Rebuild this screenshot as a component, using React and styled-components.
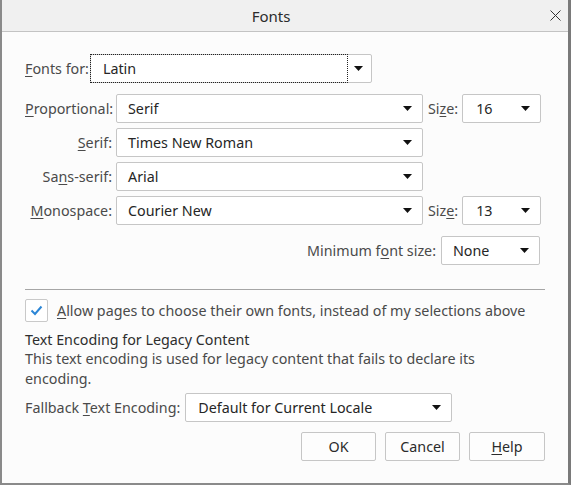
import React from 'react';
import styled, { createGlobalStyle } from 'styled-components';

const GlobalStyle = createGlobalStyle`
  html, body {
    margin: 0;
    padding: 0;
    background: #fcfcfc;
  }
  * {
    box-sizing: border-box;
  }
`;

const FONT = '"Noto Sans", "Open Sans", sans-serif';

const Window = styled.div`
  width: 571px;
  height: 485px;
  display: flex;
  flex-direction: column;
  background: #fcfcfc;
  border-left: 2px solid #8a8a8a;
  border-right: 3px solid #7a7a7a;
  border-bottom: 2px solid #8a8a8a;
  font-family: ${FONT};
  font-size: 14.3px;
  line-height: 19px;
  color: #4a4a4a;
`;

const TitleBar = styled.div`
  height: 32px;
  flex: none;
  display: flex;
  align-items: center;
  background: #f0f0f0;
  border-bottom: 1px solid #c3c3c3;
`;

const Title = styled.div`
  flex: 1;
  text-align: center;
  font-size: 15px;
  color: #2b2b2b;
  padding-top: 1px;
`;

const CloseButton = styled.div`
  width: 28px;
  height: 31px;
  display: flex;
  align-items: center;
  justify-content: center;
  padding-left: 2px;
`;

const Body = styled.div`
  flex: 1;
  display: flex;
  flex-direction: column;
  padding: 22px 23px 0 23px;
`;

const Row = styled.div`
  display: flex;
  align-items: center;
  gap: ${(p) => p.gap ?? 4}px;
  justify-content: ${(p) => (p.right ? 'flex-end' : 'flex-start')};
  margin-top: ${(p) => p.mt || 0}px;
`;

const Label = styled.span`
  white-space: nowrap;
  color: #4a4a4a;
  width: ${(p) => (p.w ? `${p.w}px` : 'auto')};
  text-align: ${(p) => (p.w ? 'right' : 'left')};
  flex: none;
`;

const Key = styled.span`
  text-decoration: underline;
  text-underline-offset: 2px;
`;

const SelectBox = styled.div`
  position: relative;
  width: ${(p) => p.w}px;
  height: 29px;
  flex: none;
  display: flex;
  align-items: center;
  background: #ffffff;
  border: 1px solid #c6c6c6;
  border-radius: 2px;
  padding-left: ${(p) => p.pad || 11}px;
  padding-right: ${(p) => p.arrowRight || 10}px;
  color: #262626;
`;

const SelectText = styled.span`
  flex: 1;
  white-space: nowrap;
`;

const FocusRing = styled.div`
  position: absolute;
  left: -1px;
  top: -1px;
  bottom: -1px;
  width: ${(p) => p.w}px;
  border: 1px dotted #222;
  pointer-events: none;
`;

const Separator = styled.div`
  height: 1px;
  background: #a6a6a6;
  margin-top: 24px;
`;

const CheckRow = styled.label`
  display: flex;
  align-items: center;
  gap: 9px;
  margin-top: 9px;
  color: #4a4a4a;
`;

const CheckBox = styled.span`
  width: 23px;
  height: 23px;
  flex: none;
  display: flex;
  align-items: center;
  justify-content: center;
  background: #ffffff;
  border: 1px solid #c9c9c9;
  border-radius: 2px;
`;

const Heading = styled.div`
  margin-top: 8px;
  color: #2e2e2e;
  line-height: 19px;
`;

const Description = styled.div`
  color: #4a4a4a;
  line-height: 20px;
  max-width: 500px;
`;

const Buttons = styled.div`
  display: flex;
  justify-content: flex-end;
  gap: 9px;
  margin-top: 10px;
`;

const Button = styled.div`
  width: ${(p) => p.w || 75}px;
  height: 29px;
  display: flex;
  align-items: center;
  justify-content: center;
  background: #fdfdfd;
  border: 1px solid #c6c6c6;
  border-radius: 2px;
  color: #2b2b2b;
`;

const Arrow = () => (
  <svg width="9" height="5" viewBox="0 0 9 5">
    <polygon points="0,0 9,0 4.5,5" fill="#111" />
  </svg>
);

const Select = ({ w, value, focus, pad, arrowRight }) => (
  <SelectBox w={w} pad={pad} arrowRight={arrowRight}>
    {focus && <FocusRing w={focus} />}
    <SelectText>{value}</SelectText>
    <Arrow />
  </SelectBox>
);

const fontRows = [
  { label: <><Key>P</Key>roportional:</>, value: 'Serif', size: <>Si<Key>z</Key>e:</>, sizeValue: '16' },
  { label: <><Key>S</Key>erif:</>, value: 'Times New Roman' },
  { label: <>Sa<Key>n</Key>s-serif:</>, value: 'Arial' },
  { label: <><Key>M</Key>onospace:</>, value: 'Courier New', size: <>Siz<Key>e</Key>:</>, sizeValue: '13' },
];

const App = () => (
  <>
    <GlobalStyle />
    <Window>
      <TitleBar>
        <Title>Fonts</Title>
        <CloseButton>
          <svg width="11" height="11" viewBox="0 0 11 11">
            <path d="M0.5 0.5 L10.5 10.5 M10.5 0.5 L0.5 10.5" stroke="#333" strokeWidth="1" />
          </svg>
        </CloseButton>
      </TitleBar>
      <Body>
        <Row gap={1}>
          <Label><Key>F</Key>onts for:</Label>
          <Select w={282} value="Latin" focus={258} pad={12} arrowRight={8} />
        </Row>

        {fontRows.map((r, i) => (
          <Row key={i} mt={i === 0 ? 11 : 5}>
            <Label w={87}>{r.label}</Label>
            <Select w={307} value={r.value} />
            {r.size && (
              <>
                <Label style={{ marginLeft: 1 }}>{r.size}</Label>
                <Select w={79} value={r.sizeValue} pad={13} arrowRight={10} />
              </>
            )}
          </Row>
        ))}

        <Row right mt={11} gap={5} style={{ paddingRight: 5 }}>
          <Label>Minimum f<Key>o</Key>nt size:</Label>
          <Select w={99} value="None" pad={11} arrowRight={10} />
        </Row>

        <Separator />

        <CheckRow>
          <CheckBox>
            <svg width="13" height="11" viewBox="0 0 13 11">
              <path d="M1.5 5.5 L5 9 L11.5 1.5" stroke="#2c86d6" strokeWidth="2" fill="none" />
            </svg>
          </CheckBox>
          <span><Key>A</Key>llow pages to choose their own fonts, instead of my selections above</span>
        </CheckRow>

        <Heading>Text Encoding for Legacy Content</Heading>
        <Description>
          This text encoding is used for legacy content that fails to declare its encoding.
        </Description>

        <Row mt={4} gap={5}>
          <Label>Fallback <Key>T</Key>ext Encoding:</Label>
          <Select w={267} value="Default for Current Locale" pad={12} arrowRight={10} />
        </Row>

        <Buttons>
          <Button>OK</Button>
          <Button>Cancel</Button>
          <Button w={76}><span><Key>H</Key>elp</span></Button>
        </Buttons>
      </Body>
    </Window>
  </>
);

export default App;
